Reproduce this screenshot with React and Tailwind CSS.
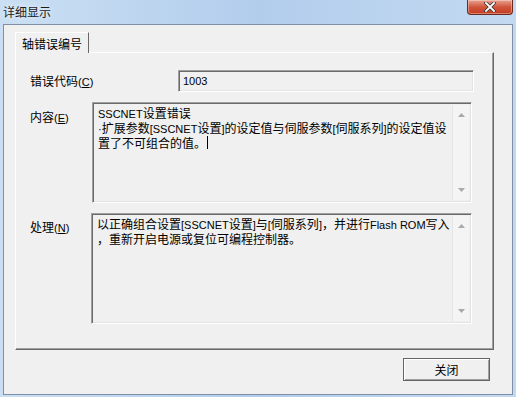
import React from 'react'

const SUNKEN =
  'border border-t-[#a0a0a0] border-l-[#a0a0a0] border-r-white border-b-white shadow-[inset_1px_1px_0_#696969,inset_-1px_-1px_0_#e3e3e3]'

function Lat({ children }) {
  return <span className="font-['Liberation_Sans'] text-[11px]">{children}</span>
}

function ScrollBar() {
  return (
    <div className="w-[17px] self-stretch flex flex-col items-center justify-between bg-[#f4f4f4] border-l border-[#e6e6e6] py-[8px]">
      <svg width="7" height="4" viewBox="0 0 7 4">
        <path d="M3.5 0 L7 4 L0 4 Z" fill="#a9a9a9" />
      </svg>
      <svg width="7" height="4" viewBox="0 0 7 4">
        <path d="M0 0 L7 0 L3.5 4 Z" fill="#a9a9a9" />
      </svg>
    </div>
  )
}

function CloseBtn() {
  return (
    <div className="w-[46px] h-[15px] rounded-b-[4px] border border-t-0 border-[#6b2a20] bg-gradient-to-b from-[#e8a08f] via-[#d0553c] to-[#c43a1f] flex items-center justify-center shadow-[inset_0_0_0_1px_rgba(255,255,255,0.35)]">
      <svg width="12" height="10" viewBox="0 0 12 10">
        <path d="M2 1 L10 9 M10 1 L2 9" stroke="#3a3a3a" strokeWidth="3.4" strokeLinecap="square" />
        <path d="M2 1 L10 9 M10 1 L2 9" stroke="#ffffff" strokeWidth="1.8" strokeLinecap="square" />
      </svg>
    </div>
  )
}

export default function App() {
  return (
    <div className="w-[516px] h-[397px] flex flex-col overflow-hidden bg-gradient-to-r from-[#cadff3] via-[#b2cdec] to-[#c3d9f1] font-['Noto_Sans_CJK_SC',sans-serif] text-[12px] leading-[13px] text-black">
      {/* Title bar */}
      <div className="h-[24px] shrink-0 flex items-start justify-between pl-[3px] pr-[3px]">
        <span className="mt-[5px] text-[12px] text-[#1b1b1b] [text-shadow:0_0_6px_#ffffff]">详细显示</span>
        <CloseBtn />
      </div>

      {/* Client area */}
      <div className="mx-[3px] mb-[2px] flex-1 border border-[#7f90a6] bg-[#f0f0f0] flex flex-col pl-[11px] pr-[18px] pt-[7px]">
        {/* Tab */}
        <div className="w-[74px] h-[21px] -mb-[1px] relative z-10 bg-[#f0f0f0] border border-b-0 border-t-white border-l-white border-r-[#696969] flex items-center justify-center pt-[1px]">
          <span className="text-[12px] leading-[14px]">轴错误编号</span>
        </div>

        {/* Tab panel */}
        <div className="h-[298px] border border-t-white border-l-white border-r-[#696969] border-b-[#696969] shadow-[inset_-1px_-1px_0_#a0a0a0] flex flex-col pl-[14px]">
          {/* 错误代码 */}
          <div className="mt-[17px] flex items-center">
            <div className="w-[148px] pt-[1px]">
              错误代码<Lat>(<span className="underline">C</span>)</Lat>
            </div>
            <div className={`w-[296px] h-[22px] bg-[#f0f0f0] ${SUNKEN} flex items-center pl-[4px]`}>
              <span className="font-['Liberation_Sans'] text-[11px] text-[#000]">1003</span>
            </div>
          </div>

          {/* 内容 */}
          <div className="mt-[10px] flex items-start">
            <div className="w-[62px] pt-[8px]">
              内容<Lat>(<span className="underline">E</span>)</Lat>
            </div>
            <div className={`w-[380px] h-[101px] bg-[#f0f0f0] ${SUNKEN} flex p-[2px]`}>
              <div className="flex-1 pl-[3px] pt-[1px] whitespace-nowrap">
                <div><Lat>SSCNET</Lat>设置错误</div>
                <div>
                  <Lat>·</Lat>扩展参数<Lat>[SSCNET</Lat>设置<Lat>]</Lat>的设定值与伺服参数<Lat>[</Lat>伺服系列<Lat>]</Lat>的设定值设
                </div>
                <div className="flex items-center">
                  置了不可组合的值。<span className="inline-block w-[1px] h-[13px] bg-black ml-[1px]" />
                </div>
              </div>
              <ScrollBar />
            </div>
          </div>

          {/* 处理 */}
          <div className="mt-[10px] flex items-start">
            <div className="w-[61px] pt-[7px]">
              处理<Lat>(<span className="underline">N</span>)</Lat>
            </div>
            <div className={`w-[381px] h-[111px] bg-[#f0f0f0] ${SUNKEN} flex p-[2px]`}>
              <div className="flex-1 pl-[3px] pt-[1px] whitespace-nowrap">
                <div>
                  以正确组合设置<Lat>[SSCNET</Lat>设置<Lat>]</Lat>与<Lat>[</Lat>伺服系列<Lat>]</Lat>，并进行<Lat>Flash ROM</Lat>写入
                </div>
                <div>，重新开启电源或复位可编程控制器。</div>
              </div>
              <ScrollBar />
            </div>
          </div>
        </div>

        {/* Buttons */}
        <div className="mt-[8px] flex justify-end pr-[4px]">
          <button className="w-[87px] h-[23px] bg-[#f0f0f0] border border-[#646464] shadow-[inset_1px_1px_0_#ffffff,inset_-1px_-1px_0_#a0a0a0] flex items-center justify-center text-[12px]">
            关闭
          </button>
        </div>
      </div>
    </div>
  )
}
